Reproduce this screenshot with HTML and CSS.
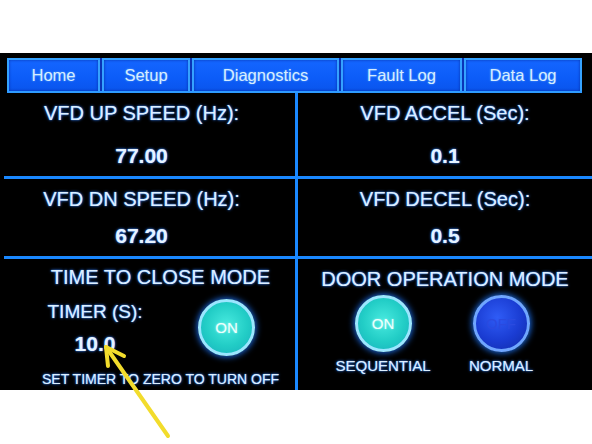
FILE: index.html
```html
<!DOCTYPE html>
<html>
<head>
<meta charset="utf-8">
<link rel="stylesheet" href="styles.css">
</head>
<body>
<div class="page">
  <div class="screen">
    <div class="tabs">
      <div class="tab tab-home">Home</div>
      <div class="tab tab-setup">Setup</div>
      <div class="tab tab-diag">Diagnostics</div>
      <div class="tab tab-fault">Fault Log</div>
      <div class="tab tab-data">Data Log</div>
    </div>
    <div class="grid">
      <div class="cell cell-left cell-top">
        <div class="label">VFD UP SPEED (Hz):</div>
        <div class="value">77.00</div>
      </div>
      <div class="cell cell-right cell-top">
        <div class="label">VFD ACCEL (Sec):</div>
        <div class="value">0.1</div>
      </div>
      <div class="cell cell-left cell-top">
        <div class="label">VFD DN SPEED (Hz):</div>
        <div class="value">67.20</div>
      </div>
      <div class="cell cell-right cell-top">
        <div class="label">VFD DECEL (Sec):</div>
        <div class="value">0.5</div>
      </div>
      <div class="cell cell-left ttc">
        <div class="title">TIME TO CLOSE MODE</div>
        <div class="ttc-row">
          <div class="timer">
            <div class="timer-label">TIMER (S):</div>
            <div class="value timer-value">10.0</div>
          </div>
          <div class="lamp lamp-on">ON</div>
        </div>
        <div class="note">SET TIMER TO ZERO TO TURN OFF</div>
      </div>
      <div class="cell cell-right door">
        <div class="title">DOOR OPERATION MODE</div>
        <div class="door-row">
          <div class="door-opt">
            <div class="lamp lamp-on">ON</div>
            <div class="opt-label">SEQUENTIAL</div>
          </div>
          <div class="door-opt">
            <div class="lamp lamp-off">OFF</div>
            <div class="opt-label">NORMAL</div>
          </div>
        </div>
      </div>
    </div>
  </div>
  <svg class="arrow" width="592" height="444" viewBox="0 0 592 444">
    <g stroke="#f2dc2c" stroke-width="4" stroke-linecap="round" fill="none">
      <line x1="168" y1="436" x2="106" y2="347"/>
      <line x1="106" y1="347" x2="124" y2="356"/>
      <line x1="106" y1="347" x2="108" y2="366"/>
    </g>
  </svg>
</div>
</body>
</html>
```

FILE: styles.css
```css
html, body {
  margin: 0;
  padding: 0;
  background: #ffffff;
}

.page {
  position: relative;
  width: 592px;
  height: 444px;
  overflow: hidden;
  font-family: "Liberation Sans", Arial, sans-serif;
}

.screen {
  margin-top: 53px;
  height: 337px;
  background: #000;
  box-sizing: border-box;
  padding-top: 5px;
  display: flex;
  flex-direction: column;
  color: #dcefff;
  text-shadow: 0 0 3px rgba(40, 120, 255, 1), 0 0 1px rgba(110, 175, 255, 1);
}

.tabs {
  display: flex;
  gap: 2px;
  margin: 0 0 0 7px;
  width: 575px;
  height: 35px;
  box-sizing: border-box;
  background: #0a34b8;
  border-bottom: 2px solid #2f9bff;
}

.tab {
  box-sizing: border-box;
  height: 33px;
  border: 2px solid #35a2ff;
  border-bottom: none;
  background: linear-gradient(#1466ff, #0c5cf8 60%, #0a55ec);
  box-shadow: inset 0 0 3px rgba(0, 20, 120, 0.6);
  display: flex;
  align-items: center;
  justify-content: center;
  font-size: 16.5px;
  color: #d6edff;
  text-shadow: 0 0 2px rgba(140, 210, 255, 0.7);
}

.tab-home { flex: 0 0 93px; }
.tab-setup { flex: 0 0 88px; }
.tab-diag { flex: 0 0 147px; }
.tab-fault { flex: 0 0 121px; }
.tab-data { flex: 0 0 118px; }

.grid {
  flex: 1;
  display: grid;
  grid-template-columns: 294px 1fr;
  grid-template-rows: 86px 80px 1fr;
  margin-left: 4px;
}

.cell {
  box-sizing: border-box;
  display: flex;
  flex-direction: column;
  align-items: center;
}

.cell-left {
  border-right: 3px solid #1a88ff;
}

.cell-top {
  border-bottom: 3px solid #1a88ff;
  justify-content: space-between;
  padding: 10px 0;
}

.cell-top.cell-left {
  padding-right: 16px;
}

.label {
  font-size: 20px;
  line-height: 20px;
}

.value {
  font-size: 21px;
  line-height: 20px;
  font-weight: bold;
  color: #e6f3ff;
}

.title {
  font-size: 20px;
  line-height: 20px;
}

.ttc {
  padding: 8px 0 0 22px;
}

.ttc-row {
  align-self: stretch;
  display: flex;
  align-items: flex-start;
  gap: 56px;
  padding-left: 22px;
  margin-top: 12px;
}

.timer {
  width: 94px;
  display: flex;
  flex-direction: column;
  align-items: center;
  margin-top: 3px;
}

.timer-label {
  font-size: 19px;
  line-height: 20px;
  white-space: nowrap;
}

.timer-value {
  margin-top: 11px;
  line-height: 22px;
}

.note {
  margin-top: 15px;
  font-size: 14px;
  line-height: 16px;
  white-space: nowrap;
}

.door {
  padding-top: 10px;
}

.door-row {
  display: flex;
  justify-content: center;
  gap: 8px;
  padding-right: 6px;
  margin-top: 6px;
  align-self: stretch;
}

.door-opt {
  width: 110px;
  display: flex;
  flex-direction: column;
  align-items: center;
}

.opt-label {
  margin-top: 6px;
  font-size: 15px;
  line-height: 16px;
}

.lamp {
  box-sizing: border-box;
  width: 57px;
  height: 57px;
  border-radius: 50%;
  display: flex;
  align-items: center;
  justify-content: center;
  font-size: 15px;
  box-shadow: 0 0 6px 1px rgba(30, 120, 255, 0.9);
}

.lamp-on {
  border: 3px solid #9be6ff;
  background: radial-gradient(circle at 50% 45%, #48eadf 0%, #22cdc6 55%, #17aebb 100%);
  color: #eefffc;
  text-shadow: 0 0 2px rgba(200, 255, 255, 0.8);
}

.lamp-off {
  border: 3px solid #6fa6ff;
  background: radial-gradient(circle at 42% 38%, #2f5cf6 0%, #1a3cd2 55%, #102aa6 100%);
  color: #2a4ae0;
  text-shadow: none;
}

.arrow {
  position: absolute;
  left: 0;
  top: 0;
  pointer-events: none;
}
```
